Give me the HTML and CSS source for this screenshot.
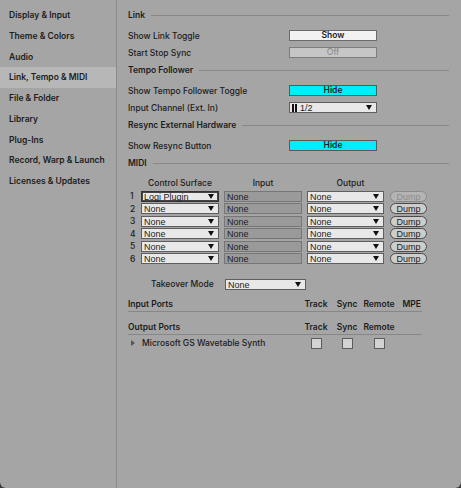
FILE: index.html
```html
<!DOCTYPE html>
<html lang="en">
<head>
  <meta charset="UTF-8">
  <meta name="viewport" content="width=device-width, initial-scale=1.0">
  <title>Preferences</title>
  <link rel="stylesheet" href="styles.css">
</head>
<body>
<div class="window">
  <!-- Tabs -->
  <nav class="sidebar">
    <div class="tab">Display &amp; Input</div>
    <div class="tab">Theme &amp; Colors</div>
    <div class="tab">Audio</div>
    <div class="tab active">Link, Tempo &amp; MIDI</div>
    <div class="tab">File &amp; Folder</div>
    <div class="tab">Library</div>
    <div class="tab">Plug-Ins</div>
    <div class="tab">Record, Warp &amp; Launch</div>
    <div class="tab">Licenses &amp; Updates</div>
  </nav>

  <main class="panel">
    <div class="section first"><span>Link</span><i></i></div>
    <div class="row"><span class="label">Show Link Toggle</span><div class="btn on">Show</div></div>
    <div class="row"><span class="label">Start Stop Sync</span><div class="btn off">Off</div></div>

    <div class="section"><span>Tempo Follower</span><i></i></div>
    <div class="row"><span class="label">Show Tempo Follower Toggle</span><div class="btn cyan">Hide</div></div>
    <div class="row">
      <span class="label">Input Channel (Ext. In)</span>
      <div class="select wide"><span class="stereo"><b></b><b></b></span>1/2<em></em></div>
    </div>

    <div class="section"><span>Resync External Hardware</span><i></i></div>
    <div class="row"><span class="label">Show Resync Button</span><div class="btn cyan">Hide</div></div>

    <div class="section"><span>MIDI</span><i></i></div>

    <div class="midi">
      <div class="midi-head">
        <span></span>
        <span>Control Surface</span>
        <span>Input</span>
        <span class="out-head">Output</span>
        <span></span>
      </div>
      <div class="midi-row">
        <span class="num">1</span>
        <div class="select focus">Logi Plugin<em></em></div>
        <div class="field">None</div>
        <div class="select">None<em></em></div>
        <div class="dump disabled">Dump</div>
      </div>
      <div class="midi-row">
        <span class="num">2</span>
        <div class="select">None<em></em></div>
        <div class="field">None</div>
        <div class="select">None<em></em></div>
        <div class="dump">Dump</div>
      </div>
      <div class="midi-row">
        <span class="num">3</span>
        <div class="select">None<em></em></div>
        <div class="field">None</div>
        <div class="select">None<em></em></div>
        <div class="dump">Dump</div>
      </div>
      <div class="midi-row">
        <span class="num">4</span>
        <div class="select">None<em></em></div>
        <div class="field">None</div>
        <div class="select">None<em></em></div>
        <div class="dump">Dump</div>
      </div>
      <div class="midi-row">
        <span class="num">5</span>
        <div class="select">None<em></em></div>
        <div class="field">None</div>
        <div class="select">None<em></em></div>
        <div class="dump">Dump</div>
      </div>
      <div class="midi-row">
        <span class="num">6</span>
        <div class="select">None<em></em></div>
        <div class="field">None</div>
        <div class="select">None<em></em></div>
        <div class="dump">Dump</div>
      </div>
    </div>

    <div class="takeover">
      <span class="label">Takeover Mode</span>
      <div class="select">None<em></em></div>
    </div>

    <div class="ports-head">
      <span class="name">Input Ports</span>
      <span class="col">Track</span>
      <span class="col">Sync</span>
      <span class="col">Remote</span>
      <span class="col mpe">MPE</span>
    </div>
    <div class="ports-head out">
      <span class="name">Output Ports</span>
      <span class="col">Track</span>
      <span class="col">Sync</span>
      <span class="col">Remote</span>
      <span class="col mpe"></span>
    </div>
    <div class="port">
      <span class="name"><span class="arrow"></span>Microsoft GS Wavetable Synth</span>
      <span class="col"><span class="check"></span></span>
      <span class="col"><span class="check"></span></span>
      <span class="col"><span class="check"></span></span>
      <span class="col mpe"></span>
    </div>
  </main>
</div>
</body>
</html>
```

FILE: styles.css
```css
/* Preferences window, grey theme */
body {
  margin: 0;
  background-color: #3a3a3a;
  font-family: Inter, "Liberation Sans", sans-serif;
  font-size: 8.5px;
  font-weight: 600;
  color: #1c1c1c;
}

.window {
  display: flex;
  width: 461px;
  height: 488px;
  background-color: #a5a5a5;
  border-radius: 0 0 6px 6px;
  overflow: hidden;
}

/* Sidebar */
.sidebar {
  width: 116px;
  flex-shrink: 0;
  padding-top: 5px;
  border-right: 1px solid #8a8a8a;
}

.tab {
  height: 20.75px;
  line-height: 20.75px;
  padding-left: 9px;
  white-space: nowrap;
}

.tab.active {
  background-color: #b7b7b7;
}

/* Main panel */
.panel {
  flex: 1;
  padding: 8px 12px 0 11px;
}

.section {
  display: flex;
  align-items: center;
  height: 14px;
  margin: 2px 0 5px;
}

.section.first {
  margin-top: 0;
}

.section i {
  flex: 1;
  height: 1px;
  margin-left: 6px;
  background-color: #888;
}

.row {
  display: flex;
  align-items: center;
  height: 17px;
}

.row .label {
  width: 161px;
  font-weight: 500;
}

.btn {
  width: 86px;
  height: 9px;
  line-height: 9px;
  border: 1px solid #6a6a6a;
  text-align: center;
}

.btn.on {
  background-color: #f2f2f2;
}

.btn.off {
  background-color: #c6c6c6;
  color: #8e8e8e;
  border-color: #7c7c7c;
  font-weight: 500;
}

.btn.cyan {
  background-color: #00eefa;
  border-color: #5a5a5a;
}

/* Dropdowns and fields use the system face */
.select,
.field,
.dump {
  box-sizing: border-box;
  height: 11px;
  line-height: 10px;
  font-family: "Liberation Sans", Arial, sans-serif;
  font-size: 9px;
  font-weight: 400;
  white-space: nowrap;
}

.select {
  position: relative;
  padding-left: 2px;
  background-color: #e8e8e8;
  border: 1px solid #5e5e5e;
}

.select em {
  position: absolute;
  right: 4px;
  top: 2px;
  border-left: 3px solid transparent;
  border-right: 3px solid transparent;
  border-top: 5px solid #111;
}

.select.focus {
  border-color: #333;
  box-shadow: inset 0 0 0 1px #444;
}

.select.wide {
  width: 88px;
}

.stereo {
  display: inline-flex;
  gap: 1px;
  margin-right: 3px;
  vertical-align: -1px;
}

.stereo b {
  width: 2px;
  height: 8px;
  background-color: #111;
}

/* MIDI table */
.midi {
  margin-top: 7px;
}

.midi-head,
.midi-row {
  display: grid;
  grid-template-columns: 8px 78px 78px 77px 38px;
  column-gap: 5px;
  align-items: center;
}

.midi-row {
  height: 12.5px;
}

.midi-row > :last-child {
  margin-left: 1px;
}

.midi-head {
  height: 12px;
  margin-bottom: 1px;
  text-align: center;
  font-weight: 500;
}

.midi-head .out-head {
  padding-left: 10px;
}

.num {
  padding-left: 2px;
  font-weight: 500;
}

.field {
  padding-left: 2px;
  background-color: #9a9a9a;
  border: 1px solid #767676;
}

.dump {
  border: 1px solid #4a4a4a;
  border-radius: 6px;
  background-color: #cdcdcd;
  text-align: center;
}

.dump.disabled {
  color: #8c8c8c;
  border-color: #8a8a8a;
  background-color: #b4b4b4;
}

/* Takeover */
.takeover {
  display: flex;
  align-items: center;
  height: 12px;
  margin-top: 13px;
  padding-left: 23px;
}

.takeover .label {
  width: 74px;
  font-weight: 500;
}

.takeover .select {
  width: 81px;
}

/* Ports */
.ports-head,
.port {
  display: flex;
  align-items: center;
  width: 294px;
}

.ports-head {
  height: 14px;
  margin-top: 7px;
  border-bottom: 1px solid #878787;
}

.ports-head.out {
  margin-top: 8px;
}

.port {
  height: 12px;
  margin-top: 2px;
}

.name {
  flex: 1;
  white-space: nowrap;
}

.port .name {
  font-weight: 500;
}

.col {
  width: 32px;
  text-align: center;
}

.col:nth-child(3) {
  width: 30px;
}

.col:nth-child(4) {
  width: 34px;
}

.col.mpe {
  width: 25px;
  text-align: right;
  padding-right: 1px;
}

.arrow {
  display: inline-block;
  margin: 0 7px 0 3px;
  border-top: 3px solid transparent;
  border-bottom: 3px solid transparent;
  border-left: 4px solid #555;
  vertical-align: 0;
}

.check {
  display: inline-block;
  box-sizing: border-box;
  width: 11px;
  height: 11px;
  border: 1px solid #5c5c5c;
  background-color: #d2d2d2;
  vertical-align: middle;
}
```
